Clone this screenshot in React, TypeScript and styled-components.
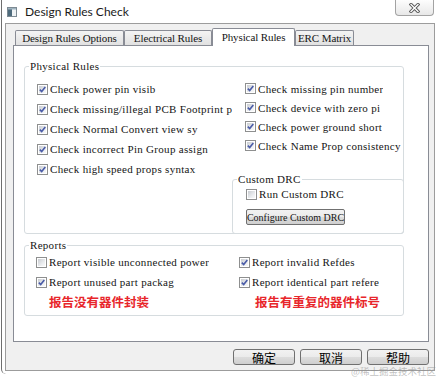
import React from "react";
import styled, { createGlobalStyle } from "styled-components";

const Global = createGlobalStyle`
  html, body { margin: 0; padding: 0; background: #fff; }
  body { width: 440px; height: 377px; overflow: hidden; }
  * { box-sizing: border-box; }
`;

const UI_FONT = `"Liberation Serif", "Times New Roman", serif`;
const CJK_FONT = `"Noto Sans CJK SC", "Noto Sans", sans-serif`;

const Screen = styled.div`
  position: relative;
  width: 440px;
  height: 377px;
  padding-left: 1px;
  background: #fff;
  overflow: hidden;
  font-family: ${UI_FONT};
  font-size: 11px;
  letter-spacing: 0.3px;
  color: #151515;
`;

const Frame = styled.div`
  height: 374px;
  border-left: 1px solid #6e6e6e;
  border-bottom-left-radius: 5px;
  display: flex;
  flex-direction: column;
`;

const TitleBar = styled.div`
  height: 23px;
  flex: none;
  display: flex;
  align-items: center;
  padding-left: 5px;
`;

const TitleText = styled.span`
  margin-left: 8px;
  font-family: Lato, "Noto Sans", sans-serif;
  font-size: 12px;
  letter-spacing: 0;
  color: #1a1a1a;
`;

const CloseButton = styled.div`
  align-self: flex-start;
  margin-left: auto;
  margin-right: 6px;
  width: 39px;
  height: 16px;
  border: 1px solid #a3a3a3;
  border-top: none;
  border-radius: 0 0 4px 4px;
  background: linear-gradient(#fdfdfd, #e8e8e8);
  display: flex;
  align-items: center;
  justify-content: center;
`;

const WindowBody = styled.div`
  margin-left: 3px;
  width: 430px;
  height: 348px;
  border: 1px solid #9c9c9c;
  background: #f0f0f0;
  display: flex;
  flex-direction: column;
`;

const TabStrip = styled.div`
  margin-top: 4px;
  height: 17px;
  padding-left: 9px;
  display: flex;
  align-items: flex-end;
`;

const Tab = styled.div<{ $active?: boolean; $w: number }>`
  position: relative;
  z-index: ${(p) => (p.$active ? 1 : 0)};
  width: ${(p) => p.$w}px;
  height: ${(p) => (p.$active ? 18 : 15)}px;
  margin-bottom: ${(p) => (p.$active ? -1 : 0)}px;
  border: 1px solid #898c95;
  border-bottom: none;
  border-radius: 2px 2px 0 0;
  background: ${(p) => (p.$active ? "#fff" : "linear-gradient(#f4f4f4, #e1e1e1)")};
  display: flex;
  align-items: center;
  justify-content: center;
  white-space: nowrap;
  overflow: hidden;
  letter-spacing: -0.1px;
  padding-bottom: ${(p) => (p.$active ? 2 : 0)}px;
`;

const Panel = styled.div`
  margin-left: 7px;
  width: 416px;
  height: 297px;
  border: 1px solid #898c95;
  background: #fff;
  padding: 14px 24px 0 10px;
  display: flex;
  flex-direction: column;
`;

const Group = styled.fieldset<{ $h: number }>`
  margin: 0;
  padding: 0;
  min-width: 0;
  height: ${(p) => p.$h}px;
  border: 1px solid #d6dcdf;
  border-radius: 3px;
  display: flex;
  flex-direction: column;
`;

const ReportsGroup = styled(Group)`
  margin-top: 5px;
`;

const CustomGroup = styled(Group)`
  flex: none;
  margin: auto -1px -1px -13px;
`;

const Legend = styled.legend`
  margin-left: 4px;
  padding: 0 1px;
  line-height: 12px;
  font-size: 11px;
`;

const TwoCol = styled.div<{ $left: number; $pt: number; $pl: number; $h: number }>`
  height: ${(p) => p.$h}px;
  display: grid;
  grid-template-columns: ${(p) => p.$left}px 1fr;
  padding: ${(p) => p.$pt}px 0 0 ${(p) => p.$pl}px;
`;

const Column = styled.div`
  display: flex;
  flex-direction: column;
  min-width: 0;
`;

const CustomBody = styled.div`
  padding: 1px 0 0 13px;
  display: flex;
  flex-direction: column;
`;

const Row = styled.div<{ $h: number }>`
  height: ${(p) => p.$h}px;
  display: flex;
  align-items: center;
  gap: 2px;
  flex: none;
`;

const Label = styled.span<{ $max?: number }>`
  white-space: nowrap;
  overflow: hidden;
  max-width: ${(p) => (p.$max ? `${p.$max}px` : "none")};
`;

const Box = styled.span`
  flex: none;
  width: 11px;
  height: 11px;
  border: 1px solid #8e8f8f;
  background: #fff;
  padding: 1px;
  display: flex;
`;

const BoxInner = styled.span`
  flex: 1;
  background: linear-gradient(135deg, #c9ccd1 0%, #eef0f2 70%, #f8f8f8 100%);
  display: flex;
  align-items: center;
  justify-content: center;
`;

const Note = styled.div<{ $indent: number }>`
  height: 18px;
  display: flex;
  align-items: center;
  padding-left: ${(p) => p.$indent}px;
  font-family: ${CJK_FONT};
  font-weight: 700;
  font-size: 12.5px;
  letter-spacing: 0;
  color: #e8262b;
`;

const ConfigButton = styled.div`
  margin-top: 7px;
  width: 99px;
  height: 16px;
  border: 1px solid #707070;
  border-radius: 2px;
  background: linear-gradient(#f2f2f2 0%, #ebebeb 50%, #dddddd 51%, #cfcfcf 100%);
  display: flex;
  align-items: center;
  justify-content: center;
  white-space: nowrap;
  overflow: hidden;
  font-size: 10px;
  letter-spacing: 0;
`;

const ButtonRow = styled.div`
  margin-top: 7px;
  padding-right: 5px;
  display: flex;
  justify-content: flex-end;
  gap: 5px;
`;

const DialogButton = styled.div`
  width: 62px;
  height: 16px;
  border: 1px solid #707070;
  border-radius: 3px;
  background: linear-gradient(#f2f2f2 0%, #ebebeb 50%, #dddddd 51%, #cfcfcf 100%);
  display: flex;
  align-items: center;
  justify-content: center;
  font-family: ${CJK_FONT};
  font-size: 12px;
  letter-spacing: 0;
  color: #000;
`;

const Watermark = styled.div`
  position: absolute;
  right: 4px;
  bottom: 0px;
  font-family: ${CJK_FONT};
  font-size: 9.5px;
  letter-spacing: 0;
  line-height: 12px;
  color: rgba(140, 140, 140, 0.55);
`;

const AppIcon = () => (
  <svg width="10" height="10" viewBox="0 0 10 10">
    <rect x="0.5" y="0.5" width="9" height="9" fill="#eef2f4" stroke="#7d8a93" />
    <rect x="1" y="1" width="4" height="8" fill="#4e6b7c" />
    <rect x="1" y="1" width="8" height="1.5" fill="#9fb3bf" />
  </svg>
);

const CloseGlyph = () => (
  <svg width="11" height="10" viewBox="0 0 11 10">
    <path d="M2 1.5 L9 8.5 M9 1.5 L2 8.5" stroke="#5a5a5a" strokeWidth="3.2" strokeLinecap="square" />
    <path d="M2 1.5 L9 8.5 M9 1.5 L2 8.5" stroke="#ffffff" strokeWidth="1.3" strokeLinecap="square" />
  </svg>
);

const Check = ({ checked }: { checked: boolean }) => (
  <Box>
    <BoxInner>
      {checked && (
        <svg width="7" height="7" viewBox="0 0 7 7">
          <path d="M0.8 3.6 L2.7 5.6 L6.3 0.9" fill="none" stroke="#4b5ca8" strokeWidth="1.6" />
        </svg>
      )}
    </BoxInner>
  </Box>
);

type Item = { text: string; checked: boolean; max?: number };

const CheckRow = ({ item, h }: { item: Item; h: number }) => (
  <Row $h={h}>
    <Check checked={item.checked} />
    <Label $max={item.max}>{item.text}</Label>
  </Row>
);

const leftRules: Item[] = [
  { text: "Check power pin visib", checked: true },
  { text: "Check missing/illegal PCB Footprint p", checked: true, max: 186 },
  { text: "Check Normal Convert view sy", checked: true },
  { text: "Check incorrect Pin Group assign", checked: true },
  { text: "Check high speed props syntax", checked: true },
];

const rightRules: Item[] = [
  { text: "Check missing pin number", checked: true },
  { text: "Check device with zero pi", checked: true },
  { text: "Check power ground short", checked: true },
  { text: "Check Name Prop consistency", checked: true },
];

const tabs = [
  { label: "Design Rules Options", w: 109 },
  { label: "Electrical Rules", w: 88 },
  { label: "Physical Rules", w: 83, active: true },
  { label: "ERC Matrix", w: 59 },
];

export default function App() {
  return (
    <Screen>
      <Global />
      <Frame>
        <TitleBar>
          <AppIcon />
          <TitleText>Design Rules Check</TitleText>
          <CloseButton>
            <CloseGlyph />
          </CloseButton>
        </TitleBar>
        <WindowBody>
          <TabStrip>
            {tabs.map((t) => (
              <Tab key={t.label} $w={t.w} $active={t.active}>
                {t.label}
              </Tab>
            ))}
          </TabStrip>
          <Panel>
            <Group $h={174}>
              <Legend>Physical Rules</Legend>
              <TwoCol $left={208} $pt={7} $pl={12} $h={161}>
                <Column>
                  {leftRules.map((r) => (
                    <CheckRow key={r.text} item={r} h={20} />
                  ))}
                </Column>
                <Column>
                  {rightRules.map((r) => (
                    <CheckRow key={r.text} item={r} h={19} />
                  ))}
                  <CustomGroup $h={61}>
                    <Legend>Custom DRC</Legend>
                    <CustomBody>
                      <CheckRow item={{ text: "Run Custom DRC", checked: false }} h={16} />
                      <ConfigButton>Configure Custom DRC</ConfigButton>
                    </CustomBody>
                  </CustomGroup>
                </Column>
              </TwoCol>
            </Group>
            <ReportsGroup $h={77}>
              <Legend>Reports</Legend>
              <TwoCol $left={203} $pt={1} $pl={11} $h={64}>
                <Column>
                  <CheckRow item={{ text: "Report visible unconnected power", checked: false }} h={20} />
                  <CheckRow item={{ text: "Report unused part packag", checked: true }} h={20} />
                  <Note $indent={13}>报告没有器件封装</Note>
                </Column>
                <Column>
                  <CheckRow item={{ text: "Report invalid Refdes", checked: true }} h={20} />
                  <CheckRow item={{ text: "Report identical part refere", checked: true }} h={20} />
                  <Note $indent={16}>报告有重复的器件标号</Note>
                </Column>
              </TwoCol>
            </ReportsGroup>
          </Panel>
          <ButtonRow>
            <DialogButton>确定</DialogButton>
            <DialogButton>取消</DialogButton>
            <DialogButton>帮助</DialogButton>
          </ButtonRow>
        </WindowBody>
      </Frame>
      <Watermark>@稀土掘金技术社区</Watermark>
    </Screen>
  );
}
